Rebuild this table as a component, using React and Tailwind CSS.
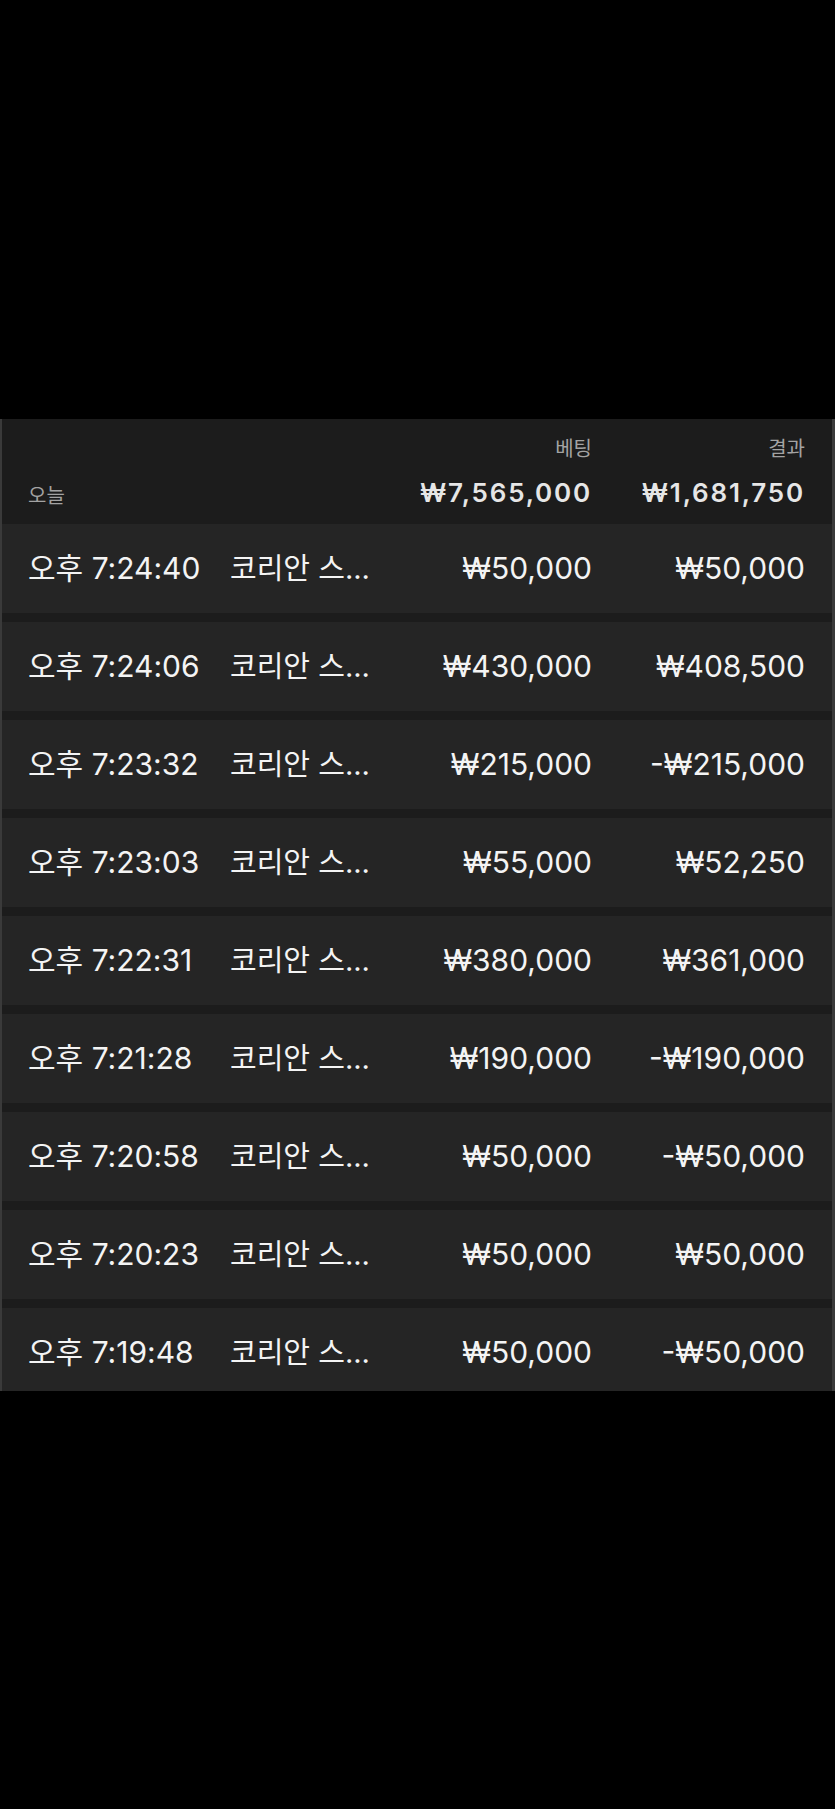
const rows = [
  { time: '오후 7:24:40', bet: '₩50,000', result: '₩50,000' },
  { time: '오후 7:24:06', bet: '₩430,000', result: '₩408,500' },
  { time: '오후 7:23:32', bet: '₩215,000', result: '-₩215,000' },
  { time: '오후 7:23:03', bet: '₩55,000', result: '₩52,250' },
  { time: '오후 7:22:31', bet: '₩380,000', result: '₩361,000' },
  { time: '오후 7:21:28', bet: '₩190,000', result: '-₩190,000' },
  { time: '오후 7:20:58', bet: '₩50,000', result: '-₩50,000' },
  { time: '오후 7:20:23', bet: '₩50,000', result: '₩50,000' },
  { time: '오후 7:19:48', bet: '₩50,000', result: '-₩50,000' },
];

const font = { fontFamily: "Inter, 'Noto Sans CJK KR', sans-serif" };

export default function App() {
  return (
    <div className="min-h-[1809px] w-[835px] bg-black pt-[419px]" style={font}>
      <div className="h-[972px] overflow-hidden border-l-2 border-r-[3px] border-[#3a3a3a] bg-[#1c1c1c]">
        {/* header */}
        <div className="flex h-[105px] items-end pb-[18px] pl-[26px] pr-[27px]">
          <div className="flex-1 text-[20px] leading-none text-[#a3a3a3]">오늘</div>
          <div className="flex w-[230px] flex-col items-end">
            <span className="text-[20px] leading-none text-[#a3a3a3]">베팅</span>
            <span className="mt-[21px] text-[26px] font-semibold leading-none tracking-[0.07em] text-[#e6e6e6]">
              ₩7,565,000
            </span>
          </div>
          <div className="flex w-[213px] flex-col items-end">
            <span className="text-[20px] leading-none text-[#a3a3a3]">결과</span>
            <span className="mt-[21px] text-[26px] font-semibold leading-none tracking-[0.07em] text-[#e6e6e6]">
              ₩1,681,750
            </span>
          </div>
        </div>

        {/* rows */}
        <div className="flex flex-col gap-[9px]">
          {rows.map((r) => (
            <div
              key={r.time}
              className="flex h-[89px] shrink-0 items-center bg-[#252525] pl-[26px] pr-[27px] text-[30px] text-[#f4f4f4]"
            >
              <div className="w-[202px] shrink-0 whitespace-nowrap">{r.time}</div>
              <div className="min-w-0 flex-1 whitespace-nowrap text-[29px]">코리안 스...</div>
              <div className="w-[230px] shrink-0 text-right">{r.bet}</div>
              <div className="w-[213px] shrink-0 text-right">{r.result}</div>
            </div>
          ))}
        </div>
      </div>
    </div>
  );
}
